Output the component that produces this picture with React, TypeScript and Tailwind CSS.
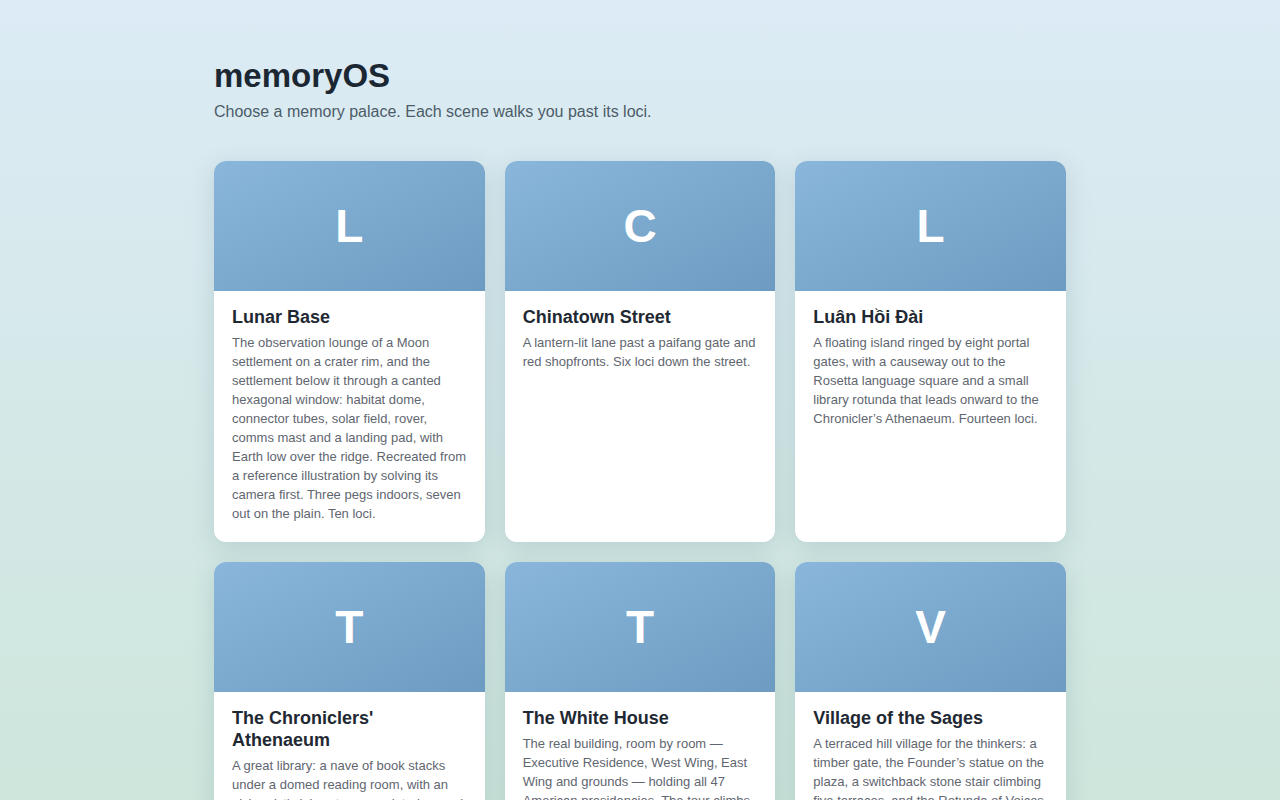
const palaces = [
  {
    letter: "L",
    name: "Lunar Base",
    blurb:
      "The observation lounge of a Moon settlement on a crater rim, and the settlement below it through a canted hexagonal window: habitat dome, connector tubes, solar field, rover, comms mast and a landing pad, with Earth low over the ridge. Recreated from a reference illustration by solving its camera first. Three pegs indoors, seven out on the plain. Ten loci.",
  },
  {
    letter: "C",
    name: "Chinatown Street",
    blurb: "A lantern-lit lane past a paifang gate and red shopfronts. Six loci down the street.",
  },
  {
    letter: "L",
    name: "Luân Hồi Đài",
    blurb:
      "A floating island ringed by eight portal gates, with a causeway out to the Rosetta language square and a small library rotunda that leads onward to the Chronicler’s Athenaeum. Fourteen loci.",
  },
  {
    letter: "T",
    name: "The Chroniclers' Athenaeum",
    blurb:
      "A great library: a nave of book stacks under a domed reading room, with an alchemist's laboratory, a scriptorium and a map gallery off the side aisles. Twelve loci.",
  },
  {
    letter: "T",
    name: "The White House",
    blurb:
      "The real building, room by room — Executive Residence, West Wing, East Wing and grounds — holding all 47 American presidencies. The tour climbs from the ground floor to the residence and out to the lawns.",
  },
  {
    letter: "V",
    name: "Village of the Sages",
    blurb:
      "A terraced hill village for the thinkers: a timber gate, the Founder’s statue on the plaza, a switchback stone stair climbing five terraces, and the Rotunda of Voices at the summit.",
  },
];

function PalaceCard({ letter, name, blurb }: { letter: string; name: string; blurb: string }) {
  return (
    <div className="overflow-hidden rounded-xl bg-white shadow-[0_6px_24px_rgba(60,100,120,0.18)]">
      <div className="flex h-[130px] items-center justify-center bg-gradient-to-br from-[#89b6da] to-[#6e9bc1]">
        <span className="text-[46px] font-bold leading-none text-white">{letter}</span>
      </div>
      <div className="px-[18px] pb-[19px] pt-[15px]">
        <h2 className="text-lg font-bold leading-[22px] text-[#1f2933]">{name}</h2>
        <p className="mt-[5px] text-[13px] leading-[19px] text-[#5f6670]">{blurb}</p>
      </div>
    </div>
  );
}

export default function App() {
  return (
    <div
      className="min-h-screen bg-gradient-to-b from-[#dcebf5] to-[#cee6dc] bg-fixed"
      style={{ fontFamily: '"Liberation Sans", Arial, sans-serif' }}
    >
      <div className="mx-auto max-w-[900px] px-6 pb-12 pt-[55px]">
        <h1 className="text-[33px] font-bold leading-[42px] text-[#1b2733]">memoryOS</h1>
        <p className="mt-[3px] text-base text-[#4c5c68]">
          Choose a memory palace. Each scene walks you past its loci.
        </p>
        <div className="mt-[37px] grid grid-cols-3 gap-5">
          {palaces.map((p, i) => (
            <PalaceCard key={i} {...p} />
          ))}
        </div>
      </div>
    </div>
  );
}
